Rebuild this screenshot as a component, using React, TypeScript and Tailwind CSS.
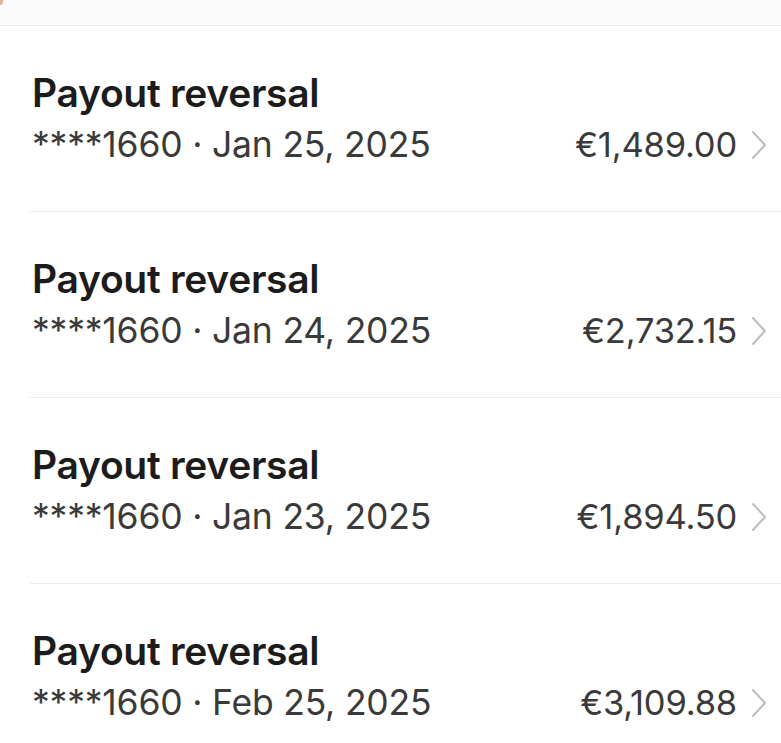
const payouts = [
  { id: 1, account: "1660", date: "Jan 25, 2025", amount: "€1,489.00" },
  { id: 2, account: "1660", date: "Jan 24, 2025", amount: "€2,732.15" },
  { id: 3, account: "1660", date: "Jan 23, 2025", amount: "€1,894.50" },
  { id: 4, account: "1660", date: "Feb 25, 2025", amount: "€3,109.88" },
];

function Chevron() {
  return (
    <svg width="16" height="30" viewBox="0 0 16 30" className="ml-[14px] text-[#bdbdbd]">
      <path
        d="M2 2 L14 15 L2 28"
        fill="none"
        stroke="currentColor"
        strokeWidth="2"
        strokeLinecap="round"
        strokeLinejoin="round"
      />
    </svg>
  );
}

export default function App() {
  return (
    <div
      className="min-h-screen bg-white"
      style={{ fontFamily: "Inter, 'Noto Sans', sans-serif" }}
    >
      {/* Top strip */}
      <div className="relative h-[26px] bg-[#fbfbfb] border-b border-[#ececec]">
        <div className="absolute left-0 top-0 w-[3px] h-[5px] rounded-br-full bg-[#e6b29c]" />
      </div>

      <div className="pl-[30px]">
        {payouts.map((p, i) => (
          <div
            key={p.id}
            className={`flex items-end pr-[14px] pt-[45px] pb-[44px] ${
              i < payouts.length - 1 ? "border-b border-[#ececec]" : ""
            }`}
          >
            <div className="flex-1 pl-[2px]">
              <div className="text-[39px] leading-[44px] font-semibold text-[#1c1c1c] tracking-[-0.3px]">
                Payout reversal
              </div>
              <div className="mt-[8px] text-[35.5px] leading-[44px] text-[#3a3a3a] tracking-[-0.2px]">
                ****{p.account} · {p.date}
              </div>
            </div>
            <div className="flex items-center h-[44px]">
              <span className="text-[34.5px] leading-[44px] text-[#3a3a3a] tracking-[-0.2px]">
                {p.amount}
              </span>
              <Chevron />
            </div>
          </div>
        ))}
      </div>
    </div>
  );
}
